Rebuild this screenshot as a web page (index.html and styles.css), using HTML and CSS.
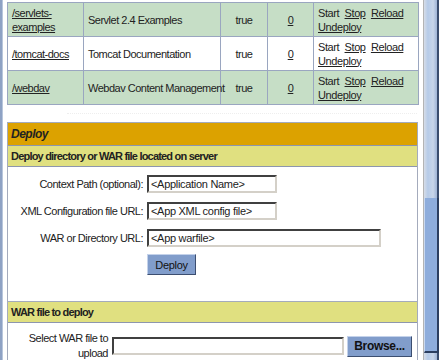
FILE: index.html
```html
<!DOCTYPE html>
<html>
	<head>
		<meta charset="UTF-8">
		<title>Tomcat Manager</title>
		<link rel="stylesheet" href="styles.css">
	</head>
	<body>
		<div class="frame">
			<div class="edge"></div>
			<div class="page">
				<table class="apps">
					<tr class="odd">
						<td class="c1"><a href="#">/servlets-<br>examples</a></td>
						<td class="c2">Servlet 2.4 Examples</td>
						<td class="c3">true</td>
						<td class="c4"><a href="#">0</a></td>
						<td class="c5">Start&nbsp; <a href="#">Stop</a>&nbsp; <a href="#">Reload</a><br><a href="#">Undeploy</a></td>
					</tr>
					<tr>
						<td class="c1"><a href="#">/tomcat-docs</a></td>
						<td class="c2">Tomcat Documentation</td>
						<td class="c3">true</td>
						<td class="c4"><a href="#">0</a></td>
						<td class="c5">Start&nbsp; <a href="#">Stop</a>&nbsp; <a href="#">Reload</a><br><a href="#">Undeploy</a></td>
					</tr>
					<tr class="odd">
						<td class="c1"><a href="#">/webdav</a></td>
						<td class="c2">Webdav Content Management</td>
						<td class="c3">true</td>
						<td class="c4"><a href="#">0</a></td>
						<td class="c5">Start&nbsp; <a href="#">Stop</a>&nbsp; <a href="#">Reload</a><br><a href="#">Undeploy</a></td>
					</tr>
				</table>

				<div class="dots"></div>

				<div class="box">
					<div class="box-title">Deploy</div>
					<div class="box-sub">Deploy directory or WAR file located on server</div>
					<div class="form">
						<div class="row">
							<label>Context Path (optional):</label>
							<input type="text" class="short" value="&lt;Application Name&gt;">
						</div>
						<div class="row">
							<label>XML Configuration file URL:</label>
							<input type="text" class="short" value="&lt;App XML config file&gt;">
						</div>
						<div class="row">
							<label>WAR or Directory URL:</label>
							<input type="text" class="long" value="&lt;App warfile&gt;">
						</div>
						<div class="row">
							<span></span>
							<div><button class="btn deploy">Deploy</button></div>
						</div>
					</div>
					<div class="box-sub second">WAR file to deploy</div>
					<div class="form upload">
						<label>Select WAR file to<br>upload</label>
						<input type="text" class="file" value="">
						<button class="btn browse">Browse...</button>
					</div>
				</div>
			</div>
			<div class="scroll">
				<div class="track"></div>
				<div class="thumb"></div>
				<div class="track"></div>
			</div>
		</div>
	</body>
</html>
```

FILE: styles.css
```css
*{
	margin: 0;
	padding: 0;
	box-sizing: border-box;
}
body{
	font-family: "Liberation Sans", Arial, sans-serif;
	font-size: 11px;
	letter-spacing: -0.5px;
	color: #222;
	background: #fff;
}
a{
	color: #222;
	text-decoration: underline;
}
.frame{
	display: flex;
	width: 439px;
	height: 360px;
	overflow: hidden;
}
.edge{
	width: 3px;
	background: #8ea2c4;
	border-right: 1px solid #b8c6dc;
}
.page{
	width: 420px;
	padding: 2px 0 0 4px;
}
/* application list */
.apps{
	width: 411px;
	border-collapse: collapse;
	border: 1px solid #9aa6c0;
	table-layout: fixed;
}
.apps td{
	border: 1px solid #9aa6c0;
	height: 34px;
	padding: 0 4px;
	line-height: 14px;
	vertical-align: middle;
	white-space: nowrap;
}
.apps tr.odd td{
	background: #c6dec6;
}
.apps .c1{ width: 76px; }
.apps .c2{ width: 137px; }
.apps .c3{ width: 47px; text-align: center; }
.apps .c4{ width: 46px; text-align: center; }
.apps .c5{ width: 105px; letter-spacing: -0.4px; }
.dots{
	width: 350px;
	margin: 8px 0 0 60px;
	height: 9px;
	border-top: 1px dotted #eee;
}
/* deploy box */
.box{
	width: 411px;
	border: 1px solid #a4abbc;
}
.box-title{
	height: 23px;
	line-height: 22px;
	padding-left: 3px;
	background: #dca200;
	border-bottom: 1px solid #8d96ae;
	font-weight: bold;
	font-style: italic;
	font-size: 12px;
}
.box-sub{
	height: 21px;
	line-height: 20px;
	padding-left: 3px;
	background: #e0e080;
	border-bottom: 1px solid #8d96ae;
	font-weight: bold;
	letter-spacing: -0.8px;
}
.box-sub.second{
	border-top: 1px solid #a4abbc;
	height: 22px;
	margin-top: 2px;
}
.form{
	padding: 8px 0 24px;
}
.row{
	display: grid;
	grid-template-columns: 135px 1fr;
	column-gap: 4px;
	align-items: center;
	margin-bottom: 9px;
}
.row:last-child{
	margin-bottom: 0;
	margin-top: -2px;
}
.row label{
	text-align: right;
	white-space: nowrap;
}
input{
	font-family: "Liberation Sans", Arial, sans-serif;
	font-size: 11px;
	letter-spacing: -0.3px;
	height: 18px;
	padding: 0 2px;
	border: 2px solid;
	border-color: #404040 #d4d0c8 #d4d0c8 #404040;
	background: #fff;
	color: #222;
}
.short{ width: 130px; }
.long{ width: 234px; }
.btn{
	font-family: "Liberation Sans", Arial, sans-serif;
	font-size: 11px;
	letter-spacing: -0.3px;
	background: #819dcb;
	border: 1px solid;
	border-color: #c4d2ea #3c4e70 #3c4e70 #c4d2ea;
	color: #111;
}
.deploy{
	width: 49px;
	height: 21px;
}
.form.upload{
	display: grid;
	grid-template-columns: 100px 232px 65px;
	column-gap: 4px;
	align-items: center;
	padding: 8px 0 10px;
}
.upload label{
	text-align: right;
	line-height: 15px;
}
.upload .file{
	width: 232px;
}
.browse{
	width: 65px;
	height: 21px;
	font-size: 12px;
	font-weight: bold;
	margin-left: -1px;
}
/* scrollbar */
.scroll{
	width: 16px;
	display: flex;
	flex-direction: column;
	border-left: 1px solid #b4b4b4;
}
.track{
	height: 198px;
	background: linear-gradient(to right, #d6dde8 0, #b6cbe8 30%, #c8d6ea 70%, #9fb4d6 100%);
	border-right: 2px solid #3a4d6e;
}
.thumb{
	height: 155px;
	background: #8eaddc;
	border-right: 2px solid #2c3f60;
	border-bottom: 2px solid #2c3f60;
	border-left: 1px solid #c8d8f0;
}
.track:last-child{
	height: 7px;
}
```
